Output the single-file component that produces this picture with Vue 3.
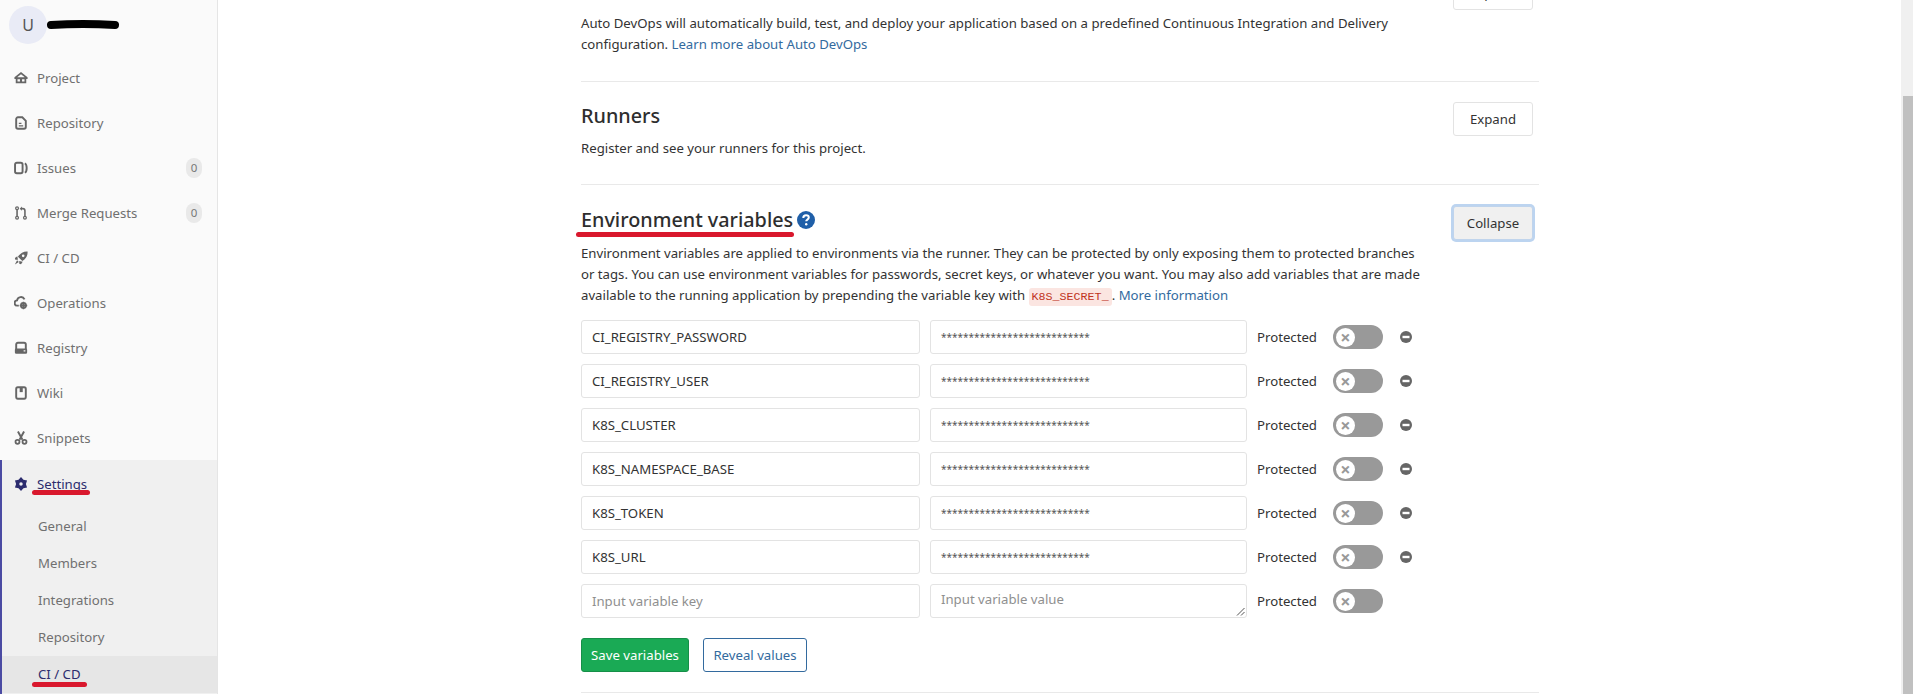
<template>
  <div class="page">
    <aside class="sidebar">
      <div class="context">
        <div class="avatar">U</div>
        <svg class="scribble" width="72" height="12" viewBox="0 0 72 12"><path d="M4 6 C22 5 50 5 68 6" stroke="#000" stroke-width="8" stroke-linecap="round" fill="none" /></svg>
      </div>
      <nav class="nav">
        <a v-for="item in navItems" :key="item.label" class="nav-item">
          <svg class="nav-icon" viewBox="0 0 16 16" v-html="item.icon"></svg>
          <span class="nav-label">{{ item.label }}</span>
          <span v-if="item.badge !== undefined" class="badge">{{ item.badge }}</span>
        </a>
      </nav>
      <div class="settings">
        <a class="nav-item active">
          <svg class="nav-icon" viewBox="0 0 16 16"><path fill="currentColor" fill-rule="evenodd" d="M8 0 10.800 3.150 14.930 4 13.600 8 14.930 12 10.800 12.850 8 16 5.200 12.850 1.070 12 2.400 8 1.070 4 5.200 3.150zM8 6a2 2 0 1 0 0 4 2 2 0 0 0 0-4z" /></svg>
          <span class="nav-label">Settings</span>
          <i class="ink ink-settings"></i>
        </a>
        <a v-for="sub in subItems" :key="sub" class="sub-item" :class="{ current: sub === 'CI / CD' }">
          {{ sub }}
          <i v-if="sub === 'CI / CD'" class="ink ink-cicd"></i>
        </a>
      </div>
    </aside>

    <main class="content">
      <section class="block first">
        <div class="block-head">
          <div class="block-text">
            <h4>Auto DevOps</h4>
            <p>Auto DevOps will automatically build, test, and deploy your application based on a predefined Continuous Integration and Delivery configuration. <a class="link">Learn more about Auto DevOps</a></p>
          </div>
          <button class="btn top-btn">Expand</button>
        </div>
      </section>

      <section class="block runners">
        <div class="block-head">
          <div class="block-text">
            <h4>Runners</h4>
            <p>Register and see your runners for this project.</p>
          </div>
          <button class="btn runners-btn">Expand</button>
        </div>
      </section>

      <section class="block env">
        <div class="block-head">
          <div class="block-text">
            <h4 class="env-title">
              <span class="env-name">Environment variables<i class="ink ink-env"></i></span>
              <svg class="help" width="18" height="18" viewBox="0 0 18 18"><circle cx="9" cy="9" r="9" fill="#1f5fa8" /><path d="M6.300 7c0-1.700 1.200-2.700 2.800-2.700s2.700 1 2.700 2.300c0 2.100-2.600 2-2.600 3.700" fill="none" stroke="#fff" stroke-width="2" /><circle cx="9.200" cy="13.200" r="1.200" fill="#fff" /></svg>
            </h4>
            <p>Environment variables are applied to environments via the runner. They can be protected by only exposing them to protected branches or tags. You can use environment variables for passwords, secret keys, or whatever you want. You may also add variables that are made available to the running application by prepending the variable key with <code>K8S_SECRET_</code>. <a class="link">More information</a></p>
          </div>
          <button class="btn focused">Collapse</button>
        </div>

        <div class="rows">
          <div v-for="row in rows" :key="row" class="row">
            <div class="field key">{{ row }}</div>
            <div class="field value masked">***************************</div>
            <span class="protected">Protected</span>
            <span class="toggle"><span class="knob">×</span></span>
            <svg class="remove" width="12" height="12" viewBox="0 0 12 12"><circle cx="6" cy="6" r="6" fill="#666" /><rect x="2.500" y="4.800" width="7" height="2.400" fill="#fff" /></svg>
          </div>
          <div class="row">
            <div class="field key placeholder">Input variable key</div>
            <div class="field value placeholder up">
              Input variable value
              <svg class="grip" width="9" height="9" viewBox="0 0 9 9"><path d="M1 8.500 8.500 1M5 8.500 8.500 5" stroke="#555" fill="none" /></svg>
            </div>
            <span class="protected">Protected</span>
            <span class="toggle"><span class="knob">×</span></span>
          </div>
        </div>

        <div class="actions">
          <button class="btn save">Save variables</button>
          <button class="btn reveal">Reveal values</button>
        </div>
      </section>
    </main>

    <div class="scrollbar"><div class="thumb"></div></div>
  </div>
</template>

<script setup>
const navItems = [
  { label: 'Project', icon: '<path fill="currentColor" fill-rule="evenodd" d="M8 1 15.500 7V9H14v5H2V9H.5V7zM8 3.600 4 6.800v.4h8v-.4zM4 9.300V12h2.800V9.300zm5.200 0V12H12V9.300z"/>' },
  { label: 'Repository', icon: '<path fill="none" stroke="currentColor" stroke-width="2.200" d="M2.500 3.500a2 2 0 0 1 2-2h5L13.500 5.500v7a2 2 0 0 1-2 2h-7a2 2 0 0 1-2-2z"/><path stroke="currentColor" stroke-width="1.400" d="M5.500 8.500h3M5.500 11.200h5"/>' },
  { label: 'Issues', badge: 0, icon: '<rect x="1.200" y="2" width="8.600" height="12" rx="2" fill="none" stroke="currentColor" stroke-width="2.200"/><path d="M12.500 2.500c1.500 1 2 3 2 5.500s-.5 4.500-2 5.500" fill="none" stroke="currentColor" stroke-width="2.200"/>' },
  { label: 'Merge Requests', badge: 0, icon: '<circle cx="3.500" cy="2.500" r="1.600" fill="none" stroke="currentColor" stroke-width="1.400"/><circle cx="3.500" cy="13.500" r="1.600" fill="none" stroke="currentColor" stroke-width="1.400"/><circle cx="12.500" cy="13.500" r="1.600" fill="none" stroke="currentColor" stroke-width="1.400"/><path d="M3.500 4v8M12.500 12V5.500C12.500 4 11.500 3 10 3H8" fill="none" stroke="currentColor" stroke-width="1.800"/><path d="M9 .5 6.500 3 9 5.500z" fill="currentColor"/>' },
  { label: 'CI / CD', icon: '<path fill="currentColor" fill-rule="evenodd" d="M15.500 .5c.4 4.800-2 8.700-6 11L4.500 6.500C7 2.500 10.800 .2 15.500 .5zM10.500 4a1.500 1.500 0 1 0 0 3 1.500 1.500 0 0 0 0-3z"/><path fill="currentColor" d="M3.800 6 1 8l.5 2h3zM10 12.200 8 15l-2-.5v-3zM3.500 10.500l2 2-4.500 3z"/>' },
  { label: 'Operations', icon: '<path d="M5.500 11H4a3 3 0 0 1-.5-6A4.500 4.500 0 0 1 12 3.800" fill="none" stroke="currentColor" stroke-width="2.200"/><circle cx="10.800" cy="10.800" r="2.700" fill="none" stroke="currentColor" stroke-width="2.400"/><path d="M10.800 6.500v8.600M6.500 10.800h8.600" stroke="currentColor" stroke-width="1.600"/>' },
  { label: 'Registry', icon: '<path fill="none" stroke="currentColor" stroke-width="2.200" d="M2.500 9V4a2 2 0 0 1 2-2h7a2 2 0 0 1 2 2v5"/><path fill="currentColor" fill-rule="evenodd" d="M2.500 8.500h11A1.500 1.500 0 0 1 15 10v3a1.500 1.500 0 0 1-1.500 1.500h-11A1.500 1.500 0 0 1 1 13v-3a1.500 1.500 0 0 1 1.500-1.500zM11 10.500v1.500h2v-1.500z"/>' },
  { label: 'Wiki', icon: '<rect x="2.500" y="1.500" width="11" height="13" rx="1.800" fill="none" stroke="currentColor" stroke-width="2.200"/><path d="M6.500 1.500h3.500v5.500H6.500z" fill="currentColor"/>' },
  { label: 'Snippets', icon: '<path d="M4.500 .5l5.200 9.500M11.500 .5 6.300 10" stroke="currentColor" stroke-width="2.200" fill="none"/><circle cx="4" cy="12.300" r="2.300" fill="none" stroke="currentColor" stroke-width="2"/><circle cx="12" cy="12.300" r="2.300" fill="none" stroke="currentColor" stroke-width="2"/>' }
]

const subItems = ['General', 'Members', 'Integrations', 'Repository', 'CI / CD']

const rows = [
  'CI_REGISTRY_PASSWORD',
  'CI_REGISTRY_USER',
  'K8S_CLUSTER',
  'K8S_NAMESPACE_BASE',
  'K8S_TOKEN',
  'K8S_URL'
]
</script>

<style scoped>
.page {
  display: flex;
  height: 694px;
  overflow: hidden;
  background: #fff;
  color: #333;
  font-family: "Noto Sans", "Open Sans", sans-serif;
  font-size: 13.2px;
}
.sidebar {
  width: 217px;
  flex: none;
  background: #fafafa;
  border-right: 1px solid #e5e5e5;
  color: #707070;
  display: flex;
  flex-direction: column;
}
.context {
  height: 55px;
  padding: 6px 0 0 9px;
  box-sizing: border-box;
  display: flex;
  align-items: flex-start;
}
.avatar {
  width: 38px;
  height: 38px;
  border-radius: 50%;
  background: #e9ebf6;
  color: #555;
  font-size: 16px;
  display: flex;
  align-items: center;
  justify-content: center;
}
.scribble {
  margin: 13px 0 0 0;
}
.nav-item {
  height: 45px;
  display: flex;
  align-items: center;
  padding: 0 15px 0 14px;
  position: relative;
}
.nav-icon {
  width: 14px;
  height: 14px;
  flex: none;
  color: #666;
  margin-right: 9px;
}
.nav-label {
  flex: 1;
}
.badge {
  width: 16px;
  height: 20px;
  border-radius: 8px;
  background: #e9e9e9;
  color: #777;
  font-size: 11.5px;
  display: flex;
  align-items: center;
  justify-content: center;
}
.settings {
  flex: 1;
  background: #f0f0f0;
  border-left: 2px solid #4b4ba3;
}
.nav-item.active {
  height: 48px;
  padding-left: 12px;
  color: #2c2c6e;
}
.nav-item.active .nav-icon {
  color: #2c2c6e;
}
.sub-item {
  display: block;
  height: 37px;
  line-height: 37px;
  padding-left: 36px;
  position: relative;
  color: #707070;
}
.sub-item.current {
  background: #e6e6e6;
  color: #2c2c6e;
}
.ink {
  position: absolute;
  height: 5px;
  background: #d9182d;
  border-radius: 3px;
}
.ink-settings {
  left: 30px;
  width: 58px;
  top: 30px;
}
.ink-cicd {
  left: 30px;
  width: 55px;
  top: 26px;
}
.ink-env {
  left: -5px;
  width: 218px;
  top: 27px;
}
.content {
  flex: 1;
  padding: 0 374px 0 363px;
  min-width: 0;
}
.block {
  border-bottom: 1px solid #e9e9e9;
}
.first {
  margin-top: -28px;
  height: 109px;
}
.top-btn {
  margin-top: 4px;
}
.runners {
  height: 103px;
  padding-top: 19px;
  box-sizing: border-box;
}
.runners h4 {
  margin-bottom: 7px;
}
.runners-btn {
  margin-top: 1px;
}
.env {
  padding-top: 20px;
  height: 508px;
  box-sizing: border-box;
}
.block-head {
  display: flex;
  justify-content: space-between;
  align-items: flex-start;
}
.block-text {
  width: 840px;
}
h4 {
  margin: 0 0 11px;
  font-size: 19.8px;
  line-height: 30px;
  font-weight: 500;
  color: #2e2e2e;
  display: flex;
  align-items: center;
}
p {
  margin: 0;
  line-height: 21px;
}
.link {
  color: #336a9e;
}
code {
  font-family: "Liberation Mono", monospace;
  font-size: 11.7px;
  color: #c0341d;
  background: #fbe5e1;
  border-radius: 3px;
  padding: 2px 3px;
}
.env-title {
  margin-bottom: 8px;
}
.env-name {
  position: relative;
}
.help {
  margin-left: 4px;
}
.btn {
  height: 34px;
  border: 1px solid #e3e3e3;
  border-radius: 3px;
  background: #fff;
  color: #333;
  font: inherit;
  padding: 0;
  margin-right: 6px;
  flex: none;
  width: 80px;
  box-sizing: border-box;
  white-space: nowrap;
}
.btn.focused {
  background: #f0f0f0;
  border-color: #c0d4ec;
  box-shadow: 0 0 0 2px #bcd4f0;
  margin-top: 1px;
}
.rows {
  margin-top: 12px;
  display: flex;
  flex-direction: column;
  gap: 10px;
}
.row {
  display: flex;
  align-items: center;
  height: 34px;
}
.field {
  height: 34px;
  box-sizing: border-box;
  border: 1px solid #e3e3e3;
  border-radius: 3px;
  padding: 0 10px;
  display: flex;
  align-items: center;
  position: relative;
}
.key {
  width: 339px;
  margin-right: 10px;
}
.value {
  width: 317px;
  margin-right: 10px;
}
.masked {
  color: #555;
  font-size: 10px;
}
.placeholder {
  color: #8f8f8f;
}
.up {
  align-items: flex-start;
  padding-top: 5px;
}
.grip {
  position: absolute;
  right: 1px;
  bottom: 1px;
}
.protected {
  width: 76px;
  flex: none;
}
.toggle {
  width: 50px;
  height: 24px;
  border-radius: 12px;
  background: #999;
  flex: none;
  display: flex;
  align-items: center;
  padding-left: 3px;
  box-sizing: border-box;
}
.knob {
  width: 19px;
  height: 19px;
  border-radius: 50%;
  background: #fff;
  color: #999;
  font-size: 18px;
  font-weight: 700;
  line-height: 18px;
  text-align: center;
}
.remove {
  margin-left: 17px;
}
.actions {
  margin-top: 20px;
  display: flex;
  gap: 14px;
}
.btn.save {
  width: 108px;
  margin: 0;
  background: #1aaa55;
  border-color: #168f48;
  color: #fff;
}
.btn.reveal {
  width: 104px;
  margin: 0;
  border-color: #336a9e;
  color: #336a9e;
}
.scrollbar {
  position: absolute;
  top: 0;
  right: 0;
  width: 12px;
  height: 694px;
  background: #f0f0f0;
}
.thumb {
  position: absolute;
  top: 96px;
  bottom: 0;
  left: 2px;
  right: 0;
  background: #c0c0c0;
}
</style>

<style>
html, body { margin: 0; overflow: hidden; }
</style>
